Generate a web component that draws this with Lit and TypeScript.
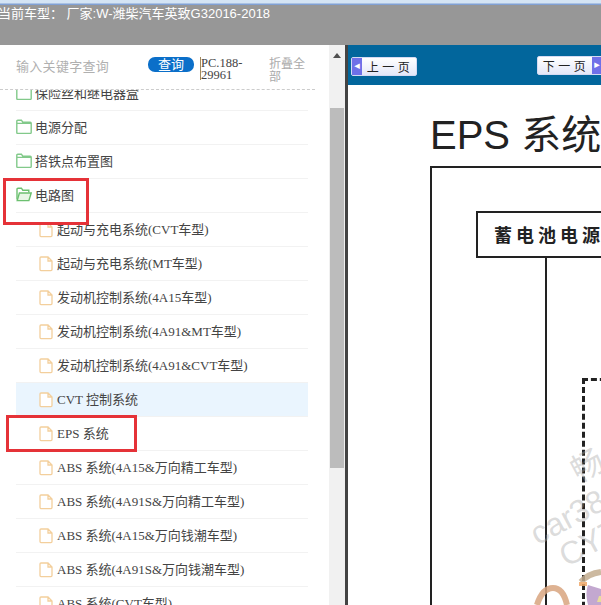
import { LitElement, html, css, svg } from "lit";
import { customElement } from "lit/decorators.js";

const folders = ["保险丝和继电器盒", "电源分配", "搭铁点布置图"];
const files = [
  "起动与充电系统(CVT车型)",
  "起动与充电系统(MT车型)",
  "发动机控制系统(4A15车型)",
  "发动机控制系统(4A91&MT车型)",
  "发动机控制系统(4A91&CVT车型)",
  "CVT 控制系统",
  "EPS 系统",
  "ABS 系统(4A15&万向精工车型)",
  "ABS 系统(4A91S&万向精工车型)",
  "ABS 系统(4A15&万向钱潮车型)",
  "ABS 系统(4A91S&万向钱潮车型)",
  "ABS 系统(CVT车型)",
];

const folderIcon = svg`<svg class="ico" viewBox="0 0 16 15" width="16" height="15"><path d="M.8 13.4V2.2q0-1 1-1h3.6l1.4 2h7.4q1 0 1 1v9.2q0 1-1 1H1.8q-1 0-1-1ZM.8 4.4h14.4" fill="#fff" stroke="#82c98a" stroke-width="1.4"/></svg>`;
const openIcon = svg`<svg class="ico" viewBox="0 0 16 15" width="16" height="15"><path d="M1 12.5V2.2q0-1 1-1h3.4l1.4 2h6v2.2" fill="#fff" stroke="#6cc070" stroke-width="1.4"/><path d="M1.2 13.6 3.4 6h11.8l-2.3 7.6Z" fill="#e8f6e6" stroke="#6cc070" stroke-width="1.4"/></svg>`;
const fileIcon = svg`<svg class="ico" viewBox="0 0 14 16" width="14" height="16"><path d="M1 13.6V2q0-1 1-1h7l4 4v8.6q0 1-1 1H2q-1 0-1-1ZM9 1v4h4" fill="#fff" stroke="#f3cf9c" stroke-width="1.3"/></svg>`;

@customElement("app-root")
export class AppRoot extends LitElement {
  static styles = css`
    :host { display: block; width: 601px; height: 605px; overflow: hidden; background: #fff; position: relative;
      font-family: "Liberation Serif", "Noto Sans CJK SC", serif; }
    .strip { height: 5px; background: linear-gradient(#d4e4f4 50%, #6b8fcb); }
    .top { height: 40px; background: #979797; color: #fff; font: 13px/18px "Liberation Sans", "Noto Sans CJK SC", sans-serif; white-space: pre; margin-left: -2px; }
    .main { display: flex; height: 560px; }
    .side { width: 329px; flex: none; display: flex; flex-direction: column; overflow: hidden; }
    .search { height: 45px; width: 315px; flex: none; border-bottom: 1px dashed #ccc; display: flex; padding-left: 16px; box-sizing: border-box; align-items: flex-start; }
    .ph { width: 132px; flex: none; font: 13px/20px "Noto Sans CJK SC", sans-serif; letter-spacing: .3px; color: #b0b0b0; margin-top: 11px; }
    .btn { width: 46px; height: 15px; flex: none; background: #0b6fc9; color: #fff; border-radius: 7px; font: 13px/14px "Noto Sans CJK SC", sans-serif; text-align: center; margin-top: 12px; }
    .code { width: 63px; flex: none; margin: 12px 0 0 6px; font-size: 12.5px; line-height: 12px; color: #444; border-left: 1px solid #a08a60; box-sizing: border-box; height: 23px; }
    .fold { width: 36px; flex: none; margin: 11px 0 0 6px; font: 12px/13px "Noto Sans CJK SC", sans-serif; color: #aaa; word-break: break-all; }
    .scroll { flex: 1; overflow: hidden; }
    .list { margin: -13px 0 0 16px; width: 292px; }
    .row { height: 34px; box-sizing: border-box; border-bottom: 1px solid #f2f2f2; display: flex; align-items: center; font: 13px/16px "Liberation Serif", "Noto Sans CJK SC", serif; color: #444; }
    .row.folder { font: 13px/16px "Noto Sans CJK SC", sans-serif; gap: 3px; padding-bottom: 2px; }
    .row.file { padding-left: 23px; gap: 4px; }
    .row.hl { background: #eaf5fe; }
    .ico { flex: none; }
    .sb { width: 16px; flex: none; background: #f1f1f1; display: flex; flex-direction: column; align-items: center; }
    .arrow { margin-top: 8px; width: 0; height: 0; border: 4px solid transparent; border-top: 0; border-bottom: 5px solid #505050; }
    .thumb { width: 14px; height: 360px; background: #bcbcbc; margin-top: 50px; }
    .divider { width: 3px; flex: none; background: #444; }
    .doc { flex: 1; position: relative; overflow: hidden; background: #fff; }
    .nav { height: 40px; background: #02669c; position: relative; }
    .pg { position: absolute; height: 19px; width: 66px; box-sizing: border-box; background: linear-gradient(#fff, #e4e7f8); border: 1px solid #d5daf2; border-radius: 2px; display: flex; align-items: center; font: 12px/17px "Noto Sans CJK SC", sans-serif; color: #222; letter-spacing: 3.5px; }
    .pg b { font-weight: normal; flex: 1; text-align: center; padding-left: 2px; }
    .pg i { width: 10px; align-self: stretch; background: #6f70e8; color: #fff; font: 11px/16px "DejaVu Sans", sans-serif; letter-spacing: 0; text-align: center; font-style: normal; }
    .prev { left: 3px; top: 12px; }
    .next { left: 189px; top: 11px; }
    .title { position: absolute; left: 82px; top: 67px; font: 40px/46px "Liberation Sans", "Noto Sans CJK SC", sans-serif; color: #222; white-space: nowrap; }
    .outer { position: absolute; left: 82px; top: 121px; width: 400px; height: 600px; border: 2px solid #222; box-sizing: border-box; }
    .box { position: absolute; left: 128px; top: 166px; width: 300px; height: 47px; border: 2px solid #222; box-sizing: border-box; padding-left: 16px; font: bold 18px/43px "Noto Sans CJK SC", sans-serif; letter-spacing: 4px; color: #222; white-space: nowrap; background: #fff; }
    .vline { position: absolute; left: 197px; top: 213px; width: 2px; height: 400px; background: #222; }
    .dash { position: absolute; left: 234px; top: 333px; width: 300px; height: 400px; border: 3px dashed #222; box-sizing: border-box; }
    .wm { position: absolute; color: rgba(170,170,170,.42); font-family: "Liberation Sans", "Noto Sans CJK SC", sans-serif; transform: rotate(-28deg); white-space: nowrap; }
    .w1 { left: 222px; top: 395px; font-size: 32px; }
    .w2 { left: 180px; top: 454px; font-size: 32px; }
    .w3 { left: 210px; top: 480px; font-size: 32px; }
    .logo { position: absolute; left: 185px; top: 515px; opacity: .85; }
    .red { position: absolute; border: 3px solid #e53238; box-sizing: border-box; }
    .r1 { left: 3px; top: 178px; width: 86px; height: 47px; }
    .r2 { left: 6px; top: 415px; width: 131px; height: 37px; }
  `;
  render() {
    return html`
      <div class="strip"></div>
      <div class="top">当前车型： 厂家:W-潍柴汽车英致G32016-2018</div>
      <div class="main">
        <div class="side">
          <div class="search">
            <div class="ph">输入关键字查询</div>
            <div class="btn">查询</div>
            <div class="code">PC.188-<br />29961</div>
            <div class="fold">折叠全部</div>
          </div>
          <div class="scroll">
            <div class="list">
              ${folders.map((f) => html`<div class="row folder">${folderIcon}<span>${f}</span></div>`)}
              <div class="row folder">${openIcon}<span>电路图</span></div>
              ${files.map((f, i) => html`<div class="row file ${i === 5 ? "hl" : ""}">${fileIcon}<span>${f}</span></div>`)}
            </div>
          </div>
        </div>
        <div class="sb"><div class="arrow"></div><div class="thumb"></div></div>
        <div class="divider"></div>
        <div class="doc">
          <div class="nav">
            <div class="pg prev"><i>◂</i><b>上一页</b></div>
            <div class="pg next"><b>下一页</b><i>▸</i></div>
          </div>
          <div class="title">EPS 系统</div>
          <div class="outer"></div>
          <div class="vline"></div>
          <div class="box">蓄电池电源</div>
          <div class="dash"></div>
          <div class="wm w1">畅</div>
          <div class="wm w2">car38</div>
          <div class="wm w3">CY7</div>
          <svg class="logo" width="68" height="45" viewBox="0 0 68 45" fill="none">
            <path d="M4 45C8 32 14 28 20 28c8 0 12 8 14 17" stroke="#d9a57f" stroke-width="6"/>
            <path d="M48 22c5-6 12-9 20-10" stroke="#c4ad90" stroke-width="6"/>
            <path d="M50 22v4" stroke="#f0a868" stroke-width="8"/>
            <path d="M55 45c-2-8-2-14 0-20l13 4v16Z" fill="#b99ac8"/>
            <path d="M66 36h2v6h-4Z" fill="#e5d68a"/>
          </svg>
        </div>
      </div>
      <div class="red r1"></div>
      <div class="red r2"></div>
    `;
  }
}
